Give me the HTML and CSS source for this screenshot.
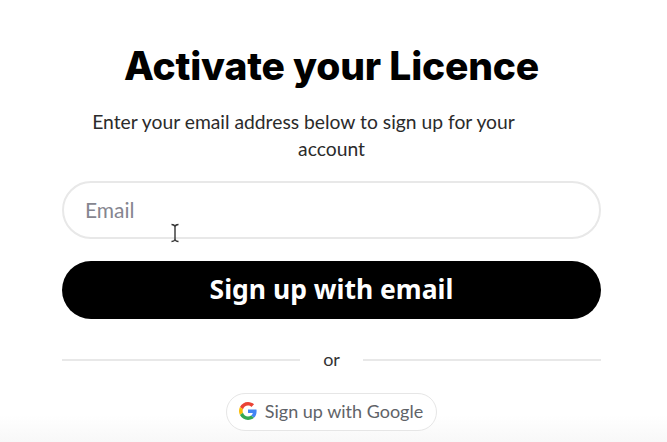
FILE: index.html
```html
<!DOCTYPE html>
<html lang="en">
<head>
  <meta charset="UTF-8">
  <title>Activate your Licence</title>
  <meta name="viewport" content="width=device-width, initial-scale=1">
  <link rel="stylesheet" href="styles.css">
</head>
<body>
  <main class="card">
    <h1>Activate your Licence</h1>
    <p class="intro">
      <span class="intro-first">Enter your email address below to sign up for your</span>
      <span class="intro-second">account</span>
    </p>

    <form class="signup" onsubmit="event.preventDefault();">
      <div class="email-wrap">
        <input class="email" type="text" placeholder="Email">
        <svg class="cursor" width="10" height="20" viewBox="0 0 10 20">
          <path d="M1.5 1.5 C3.5 1.5 4.5 2 5 3.5 C5.5 2 6.5 1.5 8.5 1.5 M5 3.5 V16.5 M1.5 18.5 C3.5 18.5 4.5 18 5 16.5 C5.5 18 6.5 18.5 8.5 18.5" fill="none" stroke="#333" stroke-width="1.4"/>
        </svg>
      </div>
      <button class="submit" type="submit">Sign up with email</button>
    </form>

    <div class="divider"><span>or</span></div>

    <button class="google" type="button">
      <svg width="18" height="18" viewBox="0 0 48 48">
        <path fill="#EA4335" d="M24 9.5c3.5 0 6.7 1.2 9.2 3.6l6.900-6.900C35.900 2.400 30.500 0 24 0 14.600 0 6.500 5.400 2.600 13.200l8 6.200C12.500 13.700 17.800 9.500 24 9.500z"/>
        <path fill="#4285F4" d="M46.900 24.500c0-1.600-.1-3.100-.4-4.500H24v9h12.900c-.6 3-2.200 5.500-4.700 7.200l7.700 6c4.500-4.200 7-10.300 7-17.700z"/>
        <path fill="#FBBC05" d="M10.500 28.600c-.5-1.400-.8-3-.8-4.600s.3-3.200.8-4.600l-8-6.200C.9 16.500 0 20.100 0 24s.9 7.500 2.600 10.800l7.900-6.200z"/>
        <path fill="#34A853" d="M24 48c6.500 0 11.900-2.100 15.900-5.800l-7.700-6c-2.200 1.400-4.900 2.300-8.200 2.300-6.200 0-11.500-4.200-13.400-9.900l-8 6.200C6.500 42.600 14.600 48 24 48z"/>
      </svg>
      <span>Sign up with Google</span>
    </button>
  </main>
</body>
</html>
```

FILE: styles.css
```css
* {
  box-sizing: border-box;
}

html, body {
  height: 100%;
}

body {
  margin: 0;
  overflow: hidden;
  font-family: 'Lato', 'Noto Sans', sans-serif;
  background: linear-gradient(to bottom, #fff 0, #fff 415px, #f8f8f8 442px);
  color: #222;
}

.card {
  display: flex;
  flex-direction: column;
  align-items: center;
  padding: 41px 66px 0 62px;
}

h1 {
  margin: 0;
  font-family: 'Inter', 'Liberation Sans', sans-serif;
  font-size: 39px;
  font-weight: 800;
  line-height: 50px;
  letter-spacing: -0.2px;
  color: #000;
}

.intro {
  margin: 17px 0 0;
  width: 100%;
  font-size: 19.3px;
  line-height: 27px;
  text-align: center;
  color: #2b2b2b;
}

.intro-first,
.intro-second {
  display: block;
}

.intro-first {
  padding-right: 56px;
}

.signup {
  margin-top: 19px;
  width: 100%;
  display: flex;
  flex-direction: column;
  gap: 22px;
}

.email-wrap {
  position: relative;
}

.email {
  display: block;
  width: 100%;
  height: 58px;
  padding: 0 21px 2px;
  border: 2px solid #e8e8e8;
  border-radius: 29px;
  background: #fff;
  font-family: inherit;
  font-size: 21px;
  outline: none;
}

.email::placeholder {
  color: #85858f;
  opacity: 1;
}

.cursor {
  position: absolute;
  left: 108px;
  top: 42px;
}

.submit {
  height: 58px;
  padding: 0 0 3px;
  border: none;
  border-radius: 29px;
  background-color: #000;
  color: #fff;
  font-family: 'Noto Sans', sans-serif;
  font-size: 26.5px;
  font-weight: 700;
  cursor: pointer;
}

.divider {
  margin-top: 29px;
  width: 100%;
  display: flex;
  align-items: center;
  gap: 23px;
  font-size: 18px;
  line-height: 22px;
  color: #333;
}

.divider span {
  padding: 0 0 1px;
}

.divider::before,
.divider::after {
  content: "";
  flex: 1;
  height: 2px;
  background-color: #e8e8e8;
}

.google {
  margin-top: 22px;
  height: 38px;
  padding: 0 13px 2px 12px;
  display: flex;
  align-items: center;
  gap: 8px;
  border: 1px solid #e6e6e6;
  border-radius: 19px;
  background: #fff;
  color: #5f6368;
  font-family: 'Lato', sans-serif;
  font-size: 18px;
  cursor: pointer;
}
```
